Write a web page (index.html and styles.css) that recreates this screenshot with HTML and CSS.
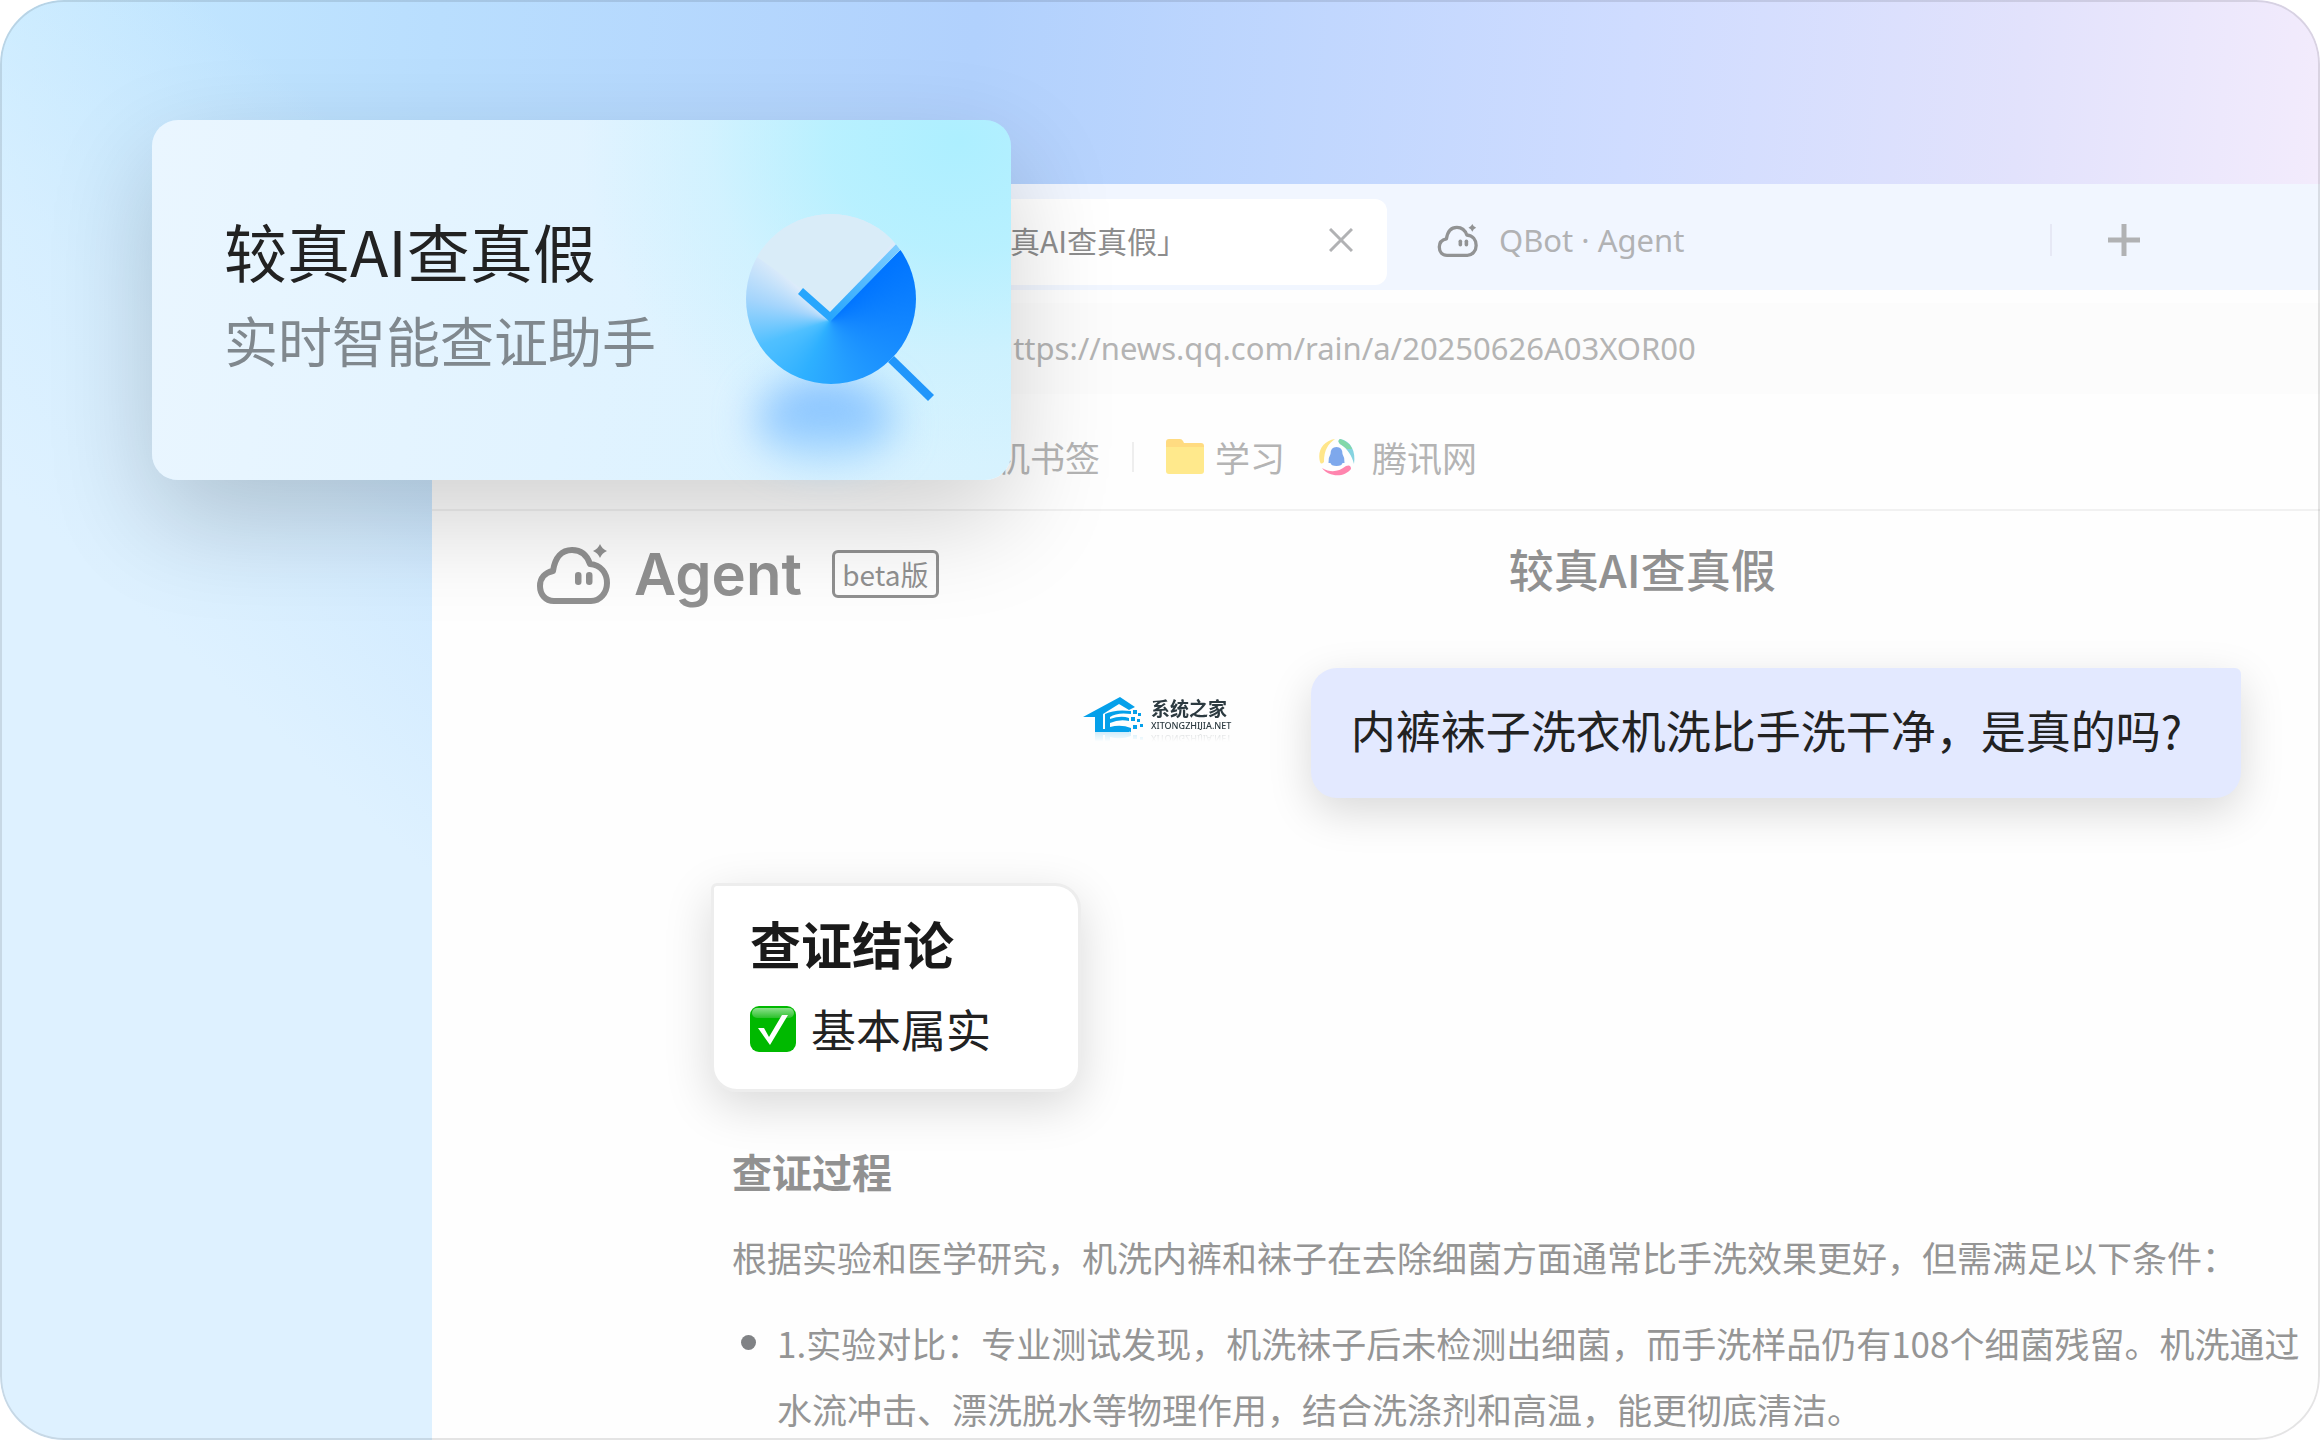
FILE: index.html
```html
<!DOCTYPE html>
<html lang="zh-CN">
<head>
<meta charset="utf-8">
<meta name="viewport" content="width=device-width, initial-scale=1">
<title>较真AI查真假</title>
<link rel="stylesheet" href="styles.css">
</head>
<body>
<svg class="sprite" aria-hidden="true">
  <symbol id="cloud" viewBox="0 0 76 60">
    <path d="M18 57C9 57 4 50 4 42C4 34 9 28.500 17 27C19 13 26 6 36 6C45 6 51 11 54 20C65 21 71 29 71 39C71 49 64 57 55 57Z" fill="none" stroke="currentColor" stroke-width="6" stroke-linejoin="round"/>
    <rect x="39" y="28" width="6.500" height="13" rx="3.200" fill="currentColor"/>
    <rect x="50" y="28" width="6.500" height="13" rx="3.200" fill="currentColor"/>
    <path d="M64 0Q66 5 71 7Q66 9 64 14Q62 9 57 7Q62 5 64 0Z" fill="currentColor"/>
  </symbol>
</svg>
<main class="scene">
  <section class="browser">
    <nav class="tabs" aria-label="标签页">
      <div class="tab tab-active">
        <button class="tab-name" type="button">「较真AI查真假」</button>
        <button class="icon-button" type="button" aria-label="关闭标签页"><svg width="24" height="24" viewBox="0 0 24 24"><path d="M1 1L23 23M23 1L1 23" stroke="currentColor" stroke-width="3"/></svg></button>
      </div>
      <button class="tab tab-idle" type="button"><svg class="cloud-small" width="42" height="33"><use href="#cloud"/></svg><span>QBot · Agent</span></button>
      <span class="tab-divider"></span>
      <button class="icon-button" type="button" aria-label="新建标签页"><svg width="32" height="32" viewBox="0 0 32 32"><path d="M16 0V32M0 16H32" stroke="currentColor" stroke-width="5"/></svg></button>
    </nav>
    <div class="address">
      <input class="url" type="text" aria-label="网址" value="https://news.qq.com/rain/a/20250626A03XOR00">
    </div>
    <nav class="bookmarks" aria-label="书签">
      <a class="bookmark" href="#">手机书签</a>
      <span class="bookmark-divider"></span>
      <a class="bookmark" href="#"><svg width="38" height="36" viewBox="0 0 38 36"><path d="M0 3Q0 0 3 0H14Q16 0 17 2L18 4H35Q38 4 38 7V20H0Z" fill="#ffdb81"/><path d="M0 8H38V32Q38 35 35 35H3Q0 35 0 32Z" fill="#ffe98c"/></svg>学习</a>
      <a class="bookmark bookmark-news" href="#"><svg width="38" height="38" viewBox="0 0 38 38"><path d="M2 24C-1 13 5 3 17 1C10 6 6 12 6 24Q3 27 2 24Z" fill="#ffe68a"/><path d="M22 1C33 3 38 13 36 26C34 18 30 11 22 6Q19 3 22 1Z" fill="#86d3e0"/><path d="M22 1C28 3 32 6 34 11L29 11Q26 8 22 6Q19 3 22 1Z" fill="#82d8a8"/><path d="M4 30C13 35 20 34 28 28Q33 26 33 31C26 40 11 39 4 30Z" fill="#ff85ae"/><path d="M18.500 9Q24.500 9 24.500 16Q27 20 26.500 25H24.500Q24 28 18.500 28T12.500 25H10.500Q10 20 12.500 16Q12.500 9 18.500 9Z" fill="#7ea8ec"/></svg>腾讯网</a>
    </nav>
    <header class="agent-bar">
      <svg class="agent-cloud" width="76" height="60"><use href="#cloud"/></svg>
      <span class="agent-name">Agent</span>
      <span class="beta">beta版</span>
      <h1 class="page-title">较真AI查真假</h1>
    </header>
    <article class="chat">
      <p class="question">内裤袜子洗衣机洗比手洗干净，是真的吗?</p>
      <section class="verdict">
        <h2 class="verdict-title">查证结论</h2>
        <p class="verdict-result"><svg width="46" height="46" viewBox="0 0 46 46" role="img" aria-label="通过"><defs><linearGradient id="gloss" x1="0" y1="0" x2="0" y2="1"><stop offset="0" stop-color="#8be08b"/><stop offset="1" stop-color="#2cc12c"/></linearGradient></defs><rect width="46" height="46" rx="9" fill="#00b900"/><rect x="2" y="2" width="42" height="10" rx="5" fill="url(#gloss)"/><path d="M8 22H14L19 31L32 9H38L20 39Z" fill="#fff"/></svg>基本属实</p>
      </section>
      <section class="process">
        <h2 class="process-title">查证过程</h2>
        <p class="process-text">根据实验和医学研究，机洗内裤和袜子在去除细菌方面通常比手洗效果更好，但需满足以下条件：</p>
        <ul class="process-list">
          <li>1.实验对比：专业测试发现，机洗袜子后未检测出细菌，而手洗样品仍有108个细菌残留。机洗通过<br>水流冲击、漂洗脱水等物理作用，结合洗涤剂和高温，能更彻底清洁。</li>
        </ul>
      </section>
    </article>
  </section>

  <aside class="feature">
    <div class="feature-copy">
      <h2 class="feature-title">较真AI查真假</h2>
      <p class="feature-sub">实时智能查证助手</p>
    </div>
    <div class="lens">
      <span class="lens-glow"></span>
      <span class="lens-disc"></span>
      <svg class="lens-lines" width="190" height="190" viewBox="0 0 190 190">
        <defs>
          <clipPath id="disc"><circle cx="85" cy="85" r="85"/></clipPath>
          <linearGradient id="tick" x1="85" y1="105" x2="150" y2="30" gradientUnits="userSpaceOnUse"><stop offset="0" stop-color="#27a6fd"/><stop offset="1" stop-color="#7fcdff"/></linearGradient>
        </defs>
        <g clip-path="url(#disc)">
          <path d="M84 100L60 78L11 43V-10H170L149 26Z" fill="#d9ecf8"/>
          <path d="M84 98L160 20L166 24L84 108Z" fill="url(#tick)"/>
        </g>
        <path d="M52 80L57 74L84 98V108Z" fill="#27a6fd"/>
        <path d="M142 148L148 142L188 181L182 187Z" fill="#2196fb"/>
      </svg>
    </div>
  </aside>

  <div class="watermark">
    <svg width="62" height="36" viewBox="0 0 62 36"><path d="M0 20L37 0L52 10L46 13L36 7L20 17V35H12V20Z" fill="#05a0ea"/><path d="M22 17Q32 12 48 14V17Q34 15 27 20V22Q38 18 46 21V24Q36 22 27 26V30Q38 27 48 31V35Q30 31 22 35Z" fill="#05a0ea"/><path d="M15 32H46V35H15ZM50 13H54V17H50ZM55 16H58V19H55ZM48 20H52V24H48ZM54 22H57V25H54ZM50 28H54V32H50ZM57 27H60V30H57Z" fill="#05a0ea"/></svg>
    <div class="watermark-text"><strong>系统之家</strong><small>XITONGZHIJIA.NET</small></div>
  </div>
</main>
</body>
</html>
```
FILE: styles.css
```css
* { box-sizing: border-box; }

body {
  margin: 0;
  background: #fff;
  color: #222;
  font-family: "Noto Sans CJK SC", sans-serif;
}

h1, h2, p, ul { margin: 0; padding: 0; font-weight: 400; }
button, input { border: 0; padding: 0; background: none; font: inherit; color: inherit; }
a { color: inherit; text-decoration: none; }
svg { display: block; flex: none; }
.sprite { position: absolute; width: 0; height: 0; }

.scene {
  position: relative;
  height: 100vh;
  padding: 184px 0 0 432px;
  overflow: hidden;
  border-radius: 64px;
  background:
    linear-gradient(222deg, rgba(222, 241, 255, 0) 54%, rgba(222, 241, 255, .7) 65%, #def1ff 73%),
    linear-gradient(95deg, #c6eaff 0%, #b9defe 18%, #b1d1fd 40%, #cfdcff 67%, #e2e2fc 83%, #f6edfc 98%);
}
.scene::after {
  content: "";
  position: absolute;
  inset: 0;
  border: 2px solid rgba(0, 0, 0, .1);
  border-radius: 64px;
  pointer-events: none;
}

/* Browser window */
.browser { min-height: 100%; background: #fefefe; white-space: nowrap; }

.tabs {
  display: flex;
  align-items: center;
  height: 106px;
  padding: 6px 180px 0 0;
  background: #f1f6ff;
  color: #b1b2b4;
}
.tab { display: flex; align-items: center; height: 86px; }
.tab-active {
  width: 955px;
  padding: 0 34px 4px 518px;
  margin-top: 4px;
  justify-content: space-between;
  border-radius: 12px;
  background: #fff;
}
.tab-name { font-size: 30px; color: #8d8d8d; }
.icon-button { display: flex; }
.tab-idle {
  gap: 20px;
  padding: 0 50px;
  font-family: "Noto Sans", "Noto Sans CJK SC", sans-serif;
  font-size: 31px;
}
.cloud-small { color: #929394; }
.tab-divider { width: 2px; height: 32px; margin: 0 56px 0 auto; background: #e6e8f5; }

.address { padding-top: 13px; }
.url {
  display: block;
  width: 100%;
  height: 91px;
  padding: 0 0 2px 562px;
  background: #fcfcfc;
  color: #b4b4b4;
  font-family: "Noto Sans", sans-serif;
  font-size: 31px;
}

.bookmarks {
  display: flex;
  align-items: center;
  height: 117px;
  padding: 10px 0 0 528px;
  border-bottom: 2px solid #f1f1f1;
  color: #b4b4b4;
  font-size: 35px;
}
.bookmark { display: flex; align-items: center; gap: 11px; }
.bookmark-divider { width: 2px; height: 30px; margin: 0 32px; background: #eee; }
.bookmark-news { margin-left: 33px; gap: 16px; }

.agent-bar {
  display: flex;
  align-items: center;
  height: 120px;
  padding: 6px 0 0 104px;
  color: #919191;
}
.agent-name {
  margin: 0 30px 0 22px;
  font-family: Inter, sans-serif;
  font-size: 58px;
  font-weight: 600;
}
.beta {
  width: 107px;
  border: 3px solid #919191;
  border-radius: 6px;
  font-size: 28px;
  line-height: 42px;
  text-align: center;
}
.page-title { margin-left: 570px; padding-bottom: 12px; font-size: 45px; font-weight: 500; }

/* Conversation */
.chat { display: flex; flex-direction: column; padding: 37px 0 0 279px; }
.question {
  align-self: flex-end;
  margin-right: 79px;
  padding: 28px 59px 34px 40px;
  border-radius: 26px 6px 26px 26px;
  background: #e3e9ff;
  box-shadow: 0 14px 44px rgba(0, 0, 0, .15);
  font-size: 45px;
  line-height: 68px;
}
.verdict {
  align-self: flex-start;
  width: 370px;
  margin-top: 85px;
  padding: 24px 36px 28px;
  border: 3px solid #ededed;
  border-radius: 6px 26px 26px 26px;
  background: #fff;
  box-shadow: 0 14px 48px rgba(0, 0, 0, .15);
}
.verdict-title { font-size: 51px; font-weight: 700; line-height: 66px; color: #1a1a1a; }
.verdict-result {
  display: flex;
  align-items: center;
  gap: 15px;
  margin-top: 21px;
  font-size: 45px;
  line-height: 64px;
}
.process { padding-left: 21px; color: #959595; font-size: 35px; line-height: 66px; }
.process-title { margin-top: 49px; font-size: 40px; font-weight: 700; line-height: 60px; color: #919191; }
.process-text { margin: 23px 0 20px; }
.process-list { list-style: none; }
.process-list li { position: relative; padding-left: 45px; }
.process-list li::before {
  content: "";
  position: absolute;
  left: 9px;
  top: 25px;
  width: 15px;
  height: 15px;
  border-radius: 50%;
  background: #808285;
}

/* Floating feature card */
.feature {
  position: absolute;
  left: 152px;
  top: 120px;
  display: flex;
  width: 859px;
  height: 360px;
  padding: 90px 95px 0 72px;
  justify-content: space-between;
  border-radius: 26px;
  background:
    radial-gradient(ellipse 44% 90% at 94% 6%, #adefff 0%, rgba(178, 240, 255, .85) 34%, rgba(190, 240, 254, .4) 66%, rgba(200, 240, 253, 0) 100%),
    linear-gradient(100deg, #eaf6ff 0%, #e1f3ff 50%, #d6f2fe 100%);
  box-shadow: 0 40px 104px rgba(0, 0, 0, .18);
  white-space: nowrap;
}
.feature-title { font-size: 63px; line-height: 80px; }
.feature-sub { margin-top: 10px; font-size: 54px; line-height: 80px; color: #80888e; }
.lens { position: relative; flex: none; width: 170px; height: 170px; margin-top: 4px; }
.lens-disc, .lens-glow, .lens-lines { position: absolute; left: 0; top: 0; }
.lens-disc {
  width: 170px;
  height: 170px;
  border-radius: 50%;
  background: conic-gradient(from 45deg at 84px 106px, #0074ff 0deg, #1488ff 55deg, #229bff 110deg, #2eb0ff 160deg, #50c0ff 205deg, #a5d5fc 240deg, #dcebfa 270deg, #dcebfa 360deg);
}
.lens-glow {
  left: 9px;
  top: 166px;
  width: 140px;
  height: 84px;
  border-radius: 50%;
  background: linear-gradient(rgba(110, 178, 255, .95), rgba(160, 216, 255, .6));
  filter: blur(20px);
}

/* Site mark */
.watermark {
  position: absolute;
  left: 1083px;
  top: 697px;
  display: flex;
  align-items: center;
  gap: 6px;
  color: #2c3a40;
  -webkit-box-reflect: below -2px linear-gradient(transparent 70%, rgba(0, 0, 0, .2));
}
.watermark-text { display: grid; }
.watermark strong { font-size: 19px; line-height: 22px; }
.watermark small { font-family: "Noto Sans", sans-serif; font-size: 9px; font-weight: 500; line-height: 14px; }
```
